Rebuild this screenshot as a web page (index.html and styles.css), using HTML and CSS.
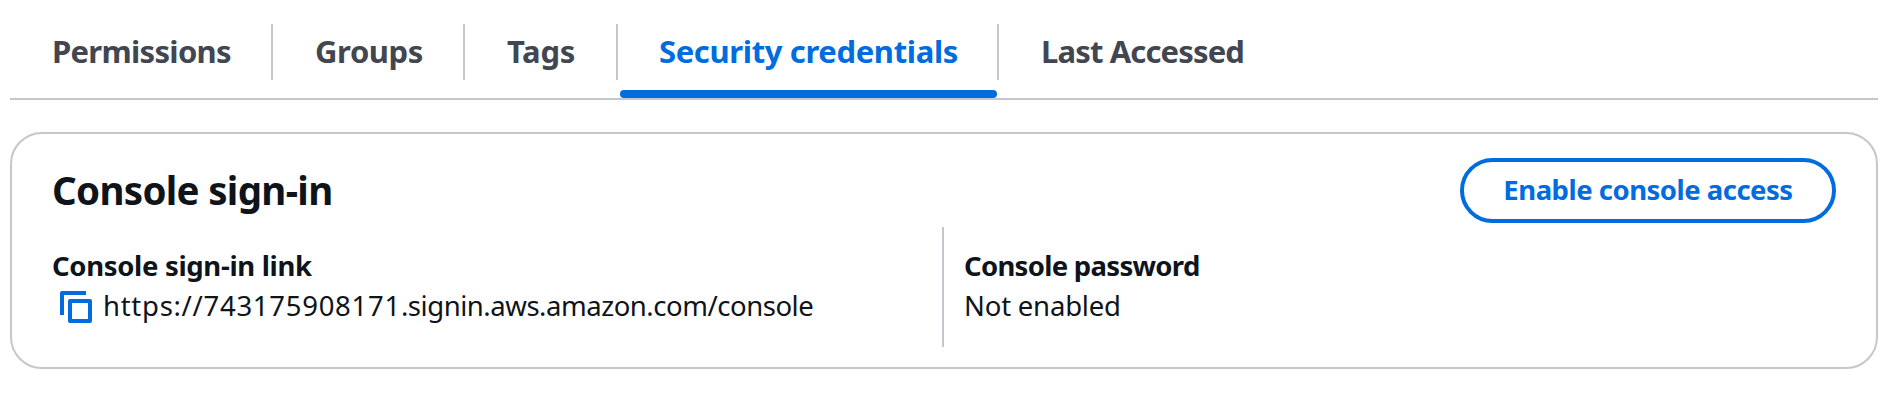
FILE: index.html
```html
<!DOCTYPE html>
<html lang="en">
<head>
<meta charset="utf-8">
<title>Security credentials</title>
<link rel="stylesheet" href="styles.css">
</head>
<body>
<nav class="tabs">
  <a class="tab tab-permissions"><span class="tab-label">Permissions</span></a>
  <a class="tab tab-groups"><span class="tab-label">Groups</span></a>
  <a class="tab tab-tags"><span class="tab-label">Tags</span></a>
  <a class="tab tab-security active"><span class="tab-label">Security credentials</span></a>
  <a class="tab tab-last"><span class="tab-label">Last Accessed</span></a>
</nav>
<section class="card">
  <header class="card-header">
    <h2 class="title">Console sign-in</h2>
    <button class="button">Enable console access</button>
  </header>
  <div class="columns">
    <div class="column column-link">
      <div class="label label-link">Console sign-in link</div>
      <div class="value value-link">
        <svg class="copy" width="32" height="32" viewBox="0 0 32 32" fill="none" stroke="currentColor" stroke-width="4" stroke-linejoin="round"><path d="M26 2H2v22"/><path d="M10 10h20v20H10z"/></svg>
        <span class="url"><span class="account">https://743175908171</span>.signin.aws.amazon.com/console</span>
      </div>
    </div>
    <div class="column column-password">
      <div class="label label-password">Console password</div>
      <div class="value value-password">Not enabled</div>
    </div>
  </div>
</section>
</body>
</html>
```

FILE: styles.css
```css
* { box-sizing: border-box; }

body {
  margin: 0;
  padding: 24px 8px 0 10px;
  background: #fff;
  color: #0f141a;
  font-family: "Noto Sans", "Open Sans", sans-serif;
  font-size: 27.5px;
}

.tabs {
  display: flex;
  height: 76px;
  border-bottom: 2px solid #c6c6cd;
}

.tab {
  position: relative;
  height: 56px;
  padding-left: 42px;
  border-right: 2px solid #c6c6cd;
  color: #424650;
  font-size: 31px;
  font-weight: 700;
  line-height: 55px;
  white-space: nowrap;
}

.tab-permissions { width: 263px; letter-spacing: -0.7px; }
.tab-groups { width: 192px; letter-spacing: -0.4px; }
.tab-tags { width: 153px; letter-spacing: -0.3px; }
.tab-security { width: 381px; padding-left: 41px; letter-spacing: -0.36px; }
.tab-last { border-right: 0; letter-spacing: -0.85px; }

.active { color: #006ce0; }

.active::after {
  content: "";
  position: absolute;
  left: 2px;
  right: 0;
  top: 66px;
  height: 8px;
  border-radius: 4px;
  background: #006ce0;
}

.card {
  height: 237px;
  margin-top: 32px;
  border: 2px solid #c6c6cd;
  border-radius: 32px;
}

.card-header {
  display: flex;
  justify-content: space-between;
  align-items: flex-start;
  height: 93px;
  padding: 24px 40px 0 40px;
}

.title {
  margin: 0;
  padding-top: 7px;
  font-size: 38.5px;
  font-weight: 700;
  line-height: 50px;
  letter-spacing: -0.68px;
}

.button {
  width: 376px;
  height: 65px;
  padding: 0 0 3px;
  border: 4px solid #006ce0;
  border-radius: 33px;
  background: #fff;
  color: #006ce0;
  font: inherit;
  font-weight: 700;
  letter-spacing: -0.5px;
}

.columns {
  display: flex;
  height: 120px;
}

.column {
  padding-top: 19px;
  line-height: 40px;
  white-space: nowrap;
}

.column-link {
  width: 930px;
  padding-left: 40px;
}

.column-password {
  padding-left: 20px;
  border-left: 2px solid #c6c6cd;
}

.label { font-weight: 700; }
.label-link { letter-spacing: -0.32px; }
.label-password { letter-spacing: -0.7px; }

.value-link {
  display: flex;
  align-items: center;
  height: 40px;
  padding-left: 8px;
}

.value-password { letter-spacing: -0.2px; }

.url { letter-spacing: -0.46px; }
.account { letter-spacing: 0.72px; }

.copy {
  flex: none;
  margin: 2px 11px 0 0;
  color: #006ce0;
}
```
